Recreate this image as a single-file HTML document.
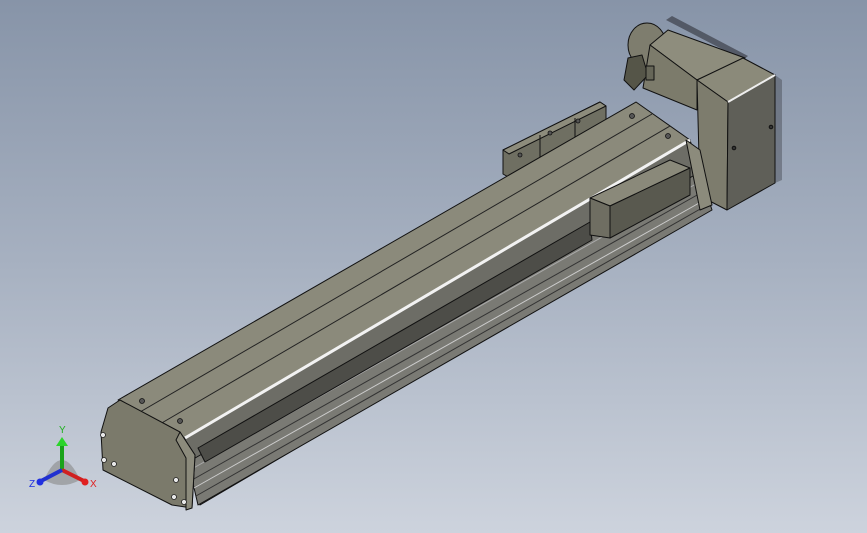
<!DOCTYPE html>
<html><head><style>
html,body{margin:0;padding:0;width:867px;height:533px;overflow:hidden}
body{background:linear-gradient(180deg,#8794a8 0%,#a7b1c1 50%,#cdd3dd 100%)}
svg{position:absolute;left:0;top:0}
</style></head><body>
<svg width="867" height="533" viewBox="0 0 867 533" font-family="Liberation Sans, sans-serif">
<g stroke="#111" stroke-width="1" stroke-linejoin="round">
<!-- shadow behind motor -->
<polygon points="666,20 672,16 748,56 743,60" fill="#2e3138" stroke="none" opacity="0.6"/>
<polygon points="775,75 782,80 782,180 775,183" fill="#3a3d44" stroke="none" opacity="0.4"/>
<!-- rear flange blocks -->
<polygon points="503,150 600,102 606,106 606,128 510,178 503,174" fill="#6f6f62"/>
<polygon points="503,150 600,102 606,106 509,154" fill="#8d8c7c"/>
<line x1="540" y1="135" x2="540" y2="160"/><line x1="575" y1="118" x2="575" y2="142"/>
<!-- motor cylinder -->
<ellipse cx="647" cy="45" rx="19" ry="22" fill="#7e7d6e"/>
<!-- motor body -->
<polygon points="650,45 668,30 745,58 697,80" fill="#8e8d7d"/>
<polygon points="650,45 697,80 697,110 643,88" fill="#7c7b6b"/>
<polygon points="628,58 642,55 648,75 634,90 624,80" fill="#555548"/>
<rect x="646" y="66" width="8" height="14" fill="#666658"/>
<!-- motor box -->
<polygon points="697,80 743,58 775,75 728,102" fill="#8b8a7a"/>
<polygon points="697,80 728,102 727,210 700,196" fill="#7d7c6d"/>
<polygon points="728,102 775,75 775,183 727,210" fill="#5f5f58"/>
<line x1="728" y1="102" x2="775" y2="75" stroke="#eee" stroke-width="2"/>
<circle cx="771" cy="127" r="1.8" fill="#333"/>
<circle cx="734" cy="148" r="1.8" fill="#333"/>
<!-- body front/side -->
<polygon points="185,438 690,140 710,205 200,505" fill="#6d6d66"/>
<polygon points="188,462 700,172 712,210 198,505" fill="#7a7a74"/>
<line x1="190" y1="470" x2="703" y2="180" stroke="#aaa"/>
<line x1="192" y1="480" x2="706" y2="190" stroke="#333"/>
<line x1="194" y1="488" x2="708" y2="198" stroke="#ccc"/>
<line x1="196" y1="496" x2="709" y2="204" stroke="#333"/>
<!-- top face -->
<polygon points="118,400 636,102 690,140 185,438" fill="#8b8a7b"/>
<line x1="140" y1="412" x2="652" y2="114" stroke="#222"/>
<line x1="160" y1="424" x2="670" y2="126" stroke="#222"/>
<line x1="185" y1="438" x2="690" y2="140" stroke="#f2f2f2" stroke-width="3"/>
<!-- slot on side -->
<polygon points="198,448 590,222 592,240 205,462" fill="#4d4d48"/>
<!-- slider block -->
<polygon points="590,198 670,160 690,168 610,206" fill="#8a897a"/>
<polygon points="590,198 610,206 610,238 590,235" fill="#6f6e62"/>
<polygon points="610,206 690,168 690,195 610,238" fill="#59594f"/>
<!-- end cap -->
<polygon points="108,408 120,400 180,432 195,455 192,508 172,505 103,470 101,432" fill="#7b7a6b"/>
<polygon points="180,432 195,455 192,508 186,510 186,458 176,440" fill="#8c8b7c"/>
<!-- right cap -->
<polygon points="686,140 700,150 712,205 700,210 690,160" fill="#8c8b7c"/>
</g>
<g fill="#e8e8e8" stroke="#222" stroke-width="0.8">
<circle cx="103" cy="435" r="2.5"/><circle cx="104" cy="460" r="2.5"/><circle cx="114" cy="464" r="2.5"/>
<circle cx="176" cy="480" r="2.5"/><circle cx="174" cy="497" r="2.5"/><circle cx="184" cy="502" r="2.5"/>
</g>
<g fill="#555" stroke="#111" stroke-width="0.8">
<circle cx="142" cy="401" r="2.5"/><circle cx="180" cy="421" r="2.5"/>
<circle cx="632" cy="116" r="2.5"/><circle cx="668" cy="136" r="2.5"/>
<circle cx="550" cy="133" r="2"/><circle cx="578" cy="121" r="2"/><circle cx="520" cy="155" r="2"/>
</g>
<!-- triad -->
<path d="M44,480 Q62,440 80,480 Q62,490 44,480Z" fill="#888" opacity="0.6"/>
<line x1="62" y1="470" x2="62" y2="445" stroke="#1aa31a" stroke-width="4"/>
<polygon points="56,446 68,446 62,437" fill="#2bd42b"/>
<line x1="62" y1="470" x2="84" y2="481" stroke="#d02020" stroke-width="4"/>
<circle cx="85" cy="482" r="3.5" fill="#e02020"/>
<line x1="62" y1="470" x2="41" y2="481" stroke="#2030d0" stroke-width="4"/>
<circle cx="40" cy="482" r="3.5" fill="#2030e0"/>
<text x="59" y="433" font-size="10" fill="#20b020">Y</text>
<text x="90" y="487" font-size="10" fill="#e02020">X</text>
<text x="29" y="487" font-size="10" fill="#2030e0">Z</text>
</svg>
</body></html>
